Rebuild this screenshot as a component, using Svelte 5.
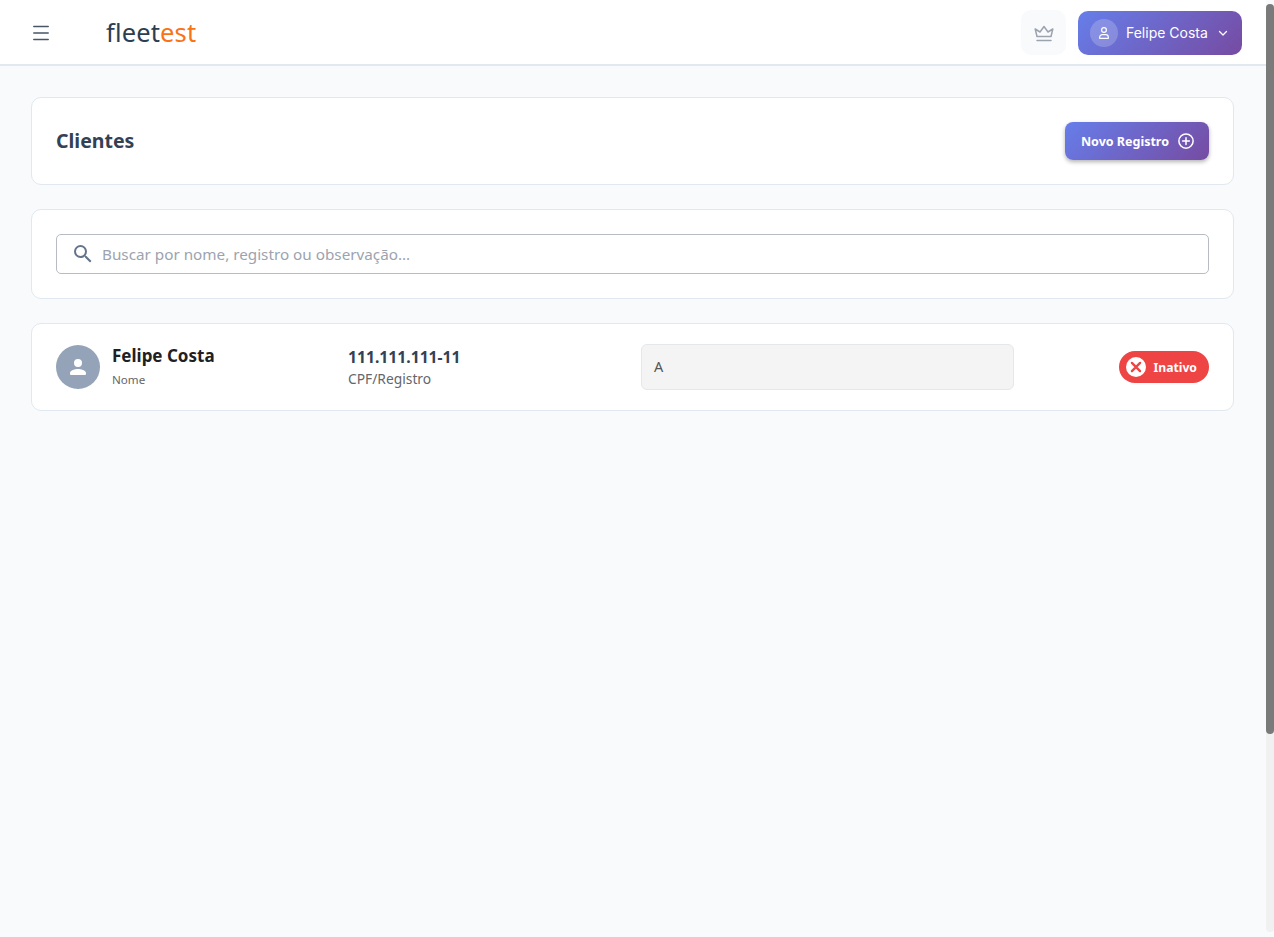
<script>
  let search = '';
</script>

<div class="shell">
  <div class="page">
    <header class="topbar">
      <div class="topbar-left">
        <button class="menu-btn" aria-label="Menu">
          <svg width="24" height="24" viewBox="0 0 24 24" fill="none" stroke="#475569" stroke-width="1.5" stroke-linecap="round">
            <path d="M4.800 5.500h14.400M4.800 12h14.400M4.800 18.500h14.400" />
          </svg>
        </button>
        <div class="logo">fleet<span>est</span></div>
      </div>
      <div class="topbar-right">
        <button class="plan-btn" aria-label="Plano">
          <svg width="24" height="24" viewBox="0 0 24 24" fill="none" stroke="#9ca3af" stroke-width="1.5" stroke-linejoin="round" stroke-linecap="round">
            <path d="M5 15.500 3.200 8l4.800 3 4-5.500 4 5.500 4.800-3-1.800 7.500z" />
            <path d="M5 19.500h14" />
          </svg>
        </button>
        <button class="user-btn">
          <span class="user-avatar">
            <svg width="16" height="16" viewBox="0 0 24 24" fill="none" stroke="#fff" stroke-width="1.800" stroke-linecap="round">
              <circle cx="12" cy="7.500" r="3.600" />
              <path d="M5.500 20v-1.500a4 4 0 0 1 4-4h5a4 4 0 0 1 4 4V20z" stroke-linejoin="round" />
            </svg>
          </span>
          <span class="user-name">Felipe Costa</span>
          <svg width="14" height="14" viewBox="0 0 24 24" fill="none" stroke="#fff" stroke-width="2.200" stroke-linecap="round" stroke-linejoin="round">
            <path d="m6 9.500 6 6 6-6" />
          </svg>
        </button>
      </div>
    </header>

    <main class="content">
      <section class="card title-card">
        <h1>Clientes</h1>
        <button class="new-btn">
          Novo Registro
          <svg width="18" height="18" viewBox="0 0 24 24" fill="none" stroke="#fff" stroke-width="2" stroke-linecap="round">
            <circle cx="12" cy="12" r="9.500" />
            <path d="M12 7.500v9M7.500 12h9" />
          </svg>
        </button>
      </section>

      <section class="card search-card">
        <label class="search">
          <svg width="24" height="24" viewBox="0 0 24 24" fill="#64748b">
            <path d="M15.500 14h-.79l-.28-.27A6.470 6.470 0 0 0 16 9.500 6.500 6.500 0 1 0 9.500 16c1.610 0 3.090-.59 4.230-1.570l.27.28v.79l5 4.990L20.490 19zm-6 0C7.010 14 5 11.990 5 9.500S7.010 5 9.500 5 14 7.010 14 9.500 11.990 14 9.500 14" />
          </svg>
          <input bind:value={search} placeholder="Buscar por nome, registro ou observação..." />
        </label>
      </section>

      <section class="card client-row">
        <div class="client-name">
          <span class="avatar">
            <svg width="24" height="24" viewBox="0 0 24 24" fill="#fff">
              <path d="M12 12a4 4 0 1 0 0-8 4 4 0 0 0 0 8m0 2c-2.670 0-8 1.340-8 4v1a1 1 0 0 0 1 1h14a1 1 0 0 0 1-1v-1c0-2.660-5.330-4-8-4" />
            </svg>
          </span>
          <div>
            <div class="name">Felipe Costa</div>
            <div class="name-label">Nome</div>
          </div>
        </div>
        <div class="client-doc">
          <div class="doc">111.111.111-11</div>
          <div class="doc-label">CPF/Registro</div>
        </div>
        <div class="client-note">A</div>
        <div class="client-status">
          <span class="status">
            <span class="status-icon">
              <svg width="14" height="14" viewBox="0 0 24 24" fill="none" stroke="#ef4444" stroke-width="4" stroke-linecap="round">
                <path d="M5 5l14 14M19 5 5 19" />
              </svg>
            </span>
            Inativo
          </span>
        </div>
      </section>
    </main>
  </div>

  <div class="scrollbar">
    <div class="scroll-track">
      <div class="scroll-thumb"></div>
    </div>
  </div>
</div>

<style>
  :global(body) {
    margin: 0;
    overflow: hidden;
    background: #f8fafc;
  }

  .shell {
    display: flex;
    height: 100vh;
    background: #f8fafc;
  }

  .page {
    flex: 1;
    min-width: 0;
    font-family: "Noto Sans", "Open Sans", sans-serif;
    color: #1f2937;
  }

  .scrollbar {
    width: 8px;
    box-sizing: border-box;
    padding: 4px 0 5px;
  }

  .scroll-track {
    height: 100%;
    border-radius: 4px;
    background: #f1f1f1;
  }

  .scroll-thumb {
    height: 730px;
    border-radius: 4px;
    background: #7a7a7a;
  }

  .topbar {
    height: 66px;
    box-sizing: border-box;
    display: flex;
    align-items: center;
    justify-content: space-between;
    padding: 1px 24px 0 29px;
    background: #fff;
    border-bottom: 2px solid #e2e8f0;
  }

  .topbar-left {
    display: flex;
    align-items: center;
    gap: 53px;
  }

  .menu-btn {
    display: flex;
    width: 24px;
    height: 24px;
    padding: 0;
    border: none;
    background: none;
  }

  .logo {
    font-size: 25.500px;
    font-weight: 400;
    line-height: 30px;
    letter-spacing: 0.15px;
    margin-top: -2px;
    color: #2c3e50;
  }

  .logo span {
    color: #f97316;
  }

  .topbar-right {
    display: flex;
    align-items: center;
    gap: 12px;
  }

  .plan-btn {
    display: flex;
    align-items: center;
    justify-content: center;
    width: 45px;
    height: 45px;
    padding: 0;
    border: none;
    border-radius: 10px;
    background: #f9fafb;
  }

  .user-btn {
    display: flex;
    align-items: center;
    width: 164px;
    height: 44px;
    padding: 0 12px;
    box-sizing: border-box;
    border: none;
    border-radius: 10px;
    background: linear-gradient(135deg, #667eea, #764ba2);
    color: #fff;
    font-family: Inter, sans-serif;
    font-size: 14px;
  }

  .user-avatar {
    display: flex;
    align-items: center;
    justify-content: center;
    width: 28px;
    height: 28px;
    border-radius: 50%;
    background: rgba(255, 255, 255, 0.2);
    flex-shrink: 0;
  }

  .user-name {
    margin: 0 8px;
    white-space: nowrap;
  }

  .content {
    display: flex;
    flex-direction: column;
    gap: 24px;
    padding: 31px 32px 0 31px;
  }

  .card {
    box-sizing: border-box;
    background: #fff;
    border: 1px solid #e2e8f0;
    border-radius: 10px;
  }

  .title-card {
    display: flex;
    align-items: center;
    justify-content: space-between;
    height: 88px;
    padding: 0 24px;
  }

  h1 {
    margin: 0 0 2px;
    font-size: 19.500px;
    font-weight: 700;
    color: #334155;
  }

  .new-btn {
    display: flex;
    align-items: center;
    gap: 8px;
    height: 38px;
    padding: 0 14px 0 16px;
    border: none;
    border-radius: 8px;
    background: linear-gradient(135deg, #667eea, #764ba2);
    box-shadow: 0 2px 4px rgba(0, 0, 0, 0.3);
    color: #fff;
    font-family: inherit;
    font-size: 12.500px;
    font-weight: 700;
  }

  .search-card {
    height: 90px;
    padding: 24px;
  }

  .search {
    display: flex;
    align-items: center;
    gap: 7px;
    height: 40px;
    box-sizing: border-box;
    padding: 0 14px;
    border: 1px solid #b8bcc2;
    border-radius: 5px;
  }

  .search input {
    flex: 1;
    border: none;
    outline: none;
    padding: 0;
    font-family: inherit;
    font-size: 15.250px;
    color: #1f2937;
  }

  .search input::placeholder {
    color: #9ca3af;
  }

  .client-row {
    display: flex;
    align-items: center;
    height: 88px;
    padding: 0 24px;
  }

  .client-name {
    display: flex;
    align-items: center;
    gap: 12px;
    width: 292px;
  }

  .avatar {
    display: flex;
    align-items: center;
    justify-content: center;
    width: 44px;
    height: 44px;
    border-radius: 50%;
    background: #94a3b8;
  }

  .name {
    font-size: 17px;
    font-weight: 700;
    line-height: 24px;
    margin-top: -2px;
    color: #1f2023;
  }

  .name-label {
    font-size: 11.600px;
    line-height: 16px;
    margin-top: 4px;
    color: #64666b;
  }

  .client-doc {
    width: 293px;
  }

  .doc {
    font-size: 15.700px;
    font-weight: 700;
    line-height: 22px;
    color: #334155;
  }

  .doc-label {
    font-size: 13.800px;
    line-height: 20px;
    margin-top: 1px;
    color: #64666b;
  }

  .client-note {
    box-sizing: border-box;
    width: 373px;
    height: 46px;
    padding: 0 12px 2px;
    display: flex;
    align-items: center;
    border: 1px solid #e5e7eb;
    border-radius: 6px;
    background: #f4f4f4;
    font-size: 14.500px;
    color: #555;
  }

  .client-status {
    flex: 1;
    display: flex;
    justify-content: flex-end;
  }

  .status {
    display: flex;
    align-items: center;
    gap: 8px;
    height: 32px;
    padding: 0 12px 0 7px;
    border-radius: 16px;
    background: #ef4444;
    color: #fff;
    font-size: 12.200px;
    font-weight: 700;
  }

  .status-icon {
    display: flex;
    align-items: center;
    justify-content: center;
    width: 20px;
    height: 20px;
    border-radius: 50%;
    background: #fff;
  }
</style>
